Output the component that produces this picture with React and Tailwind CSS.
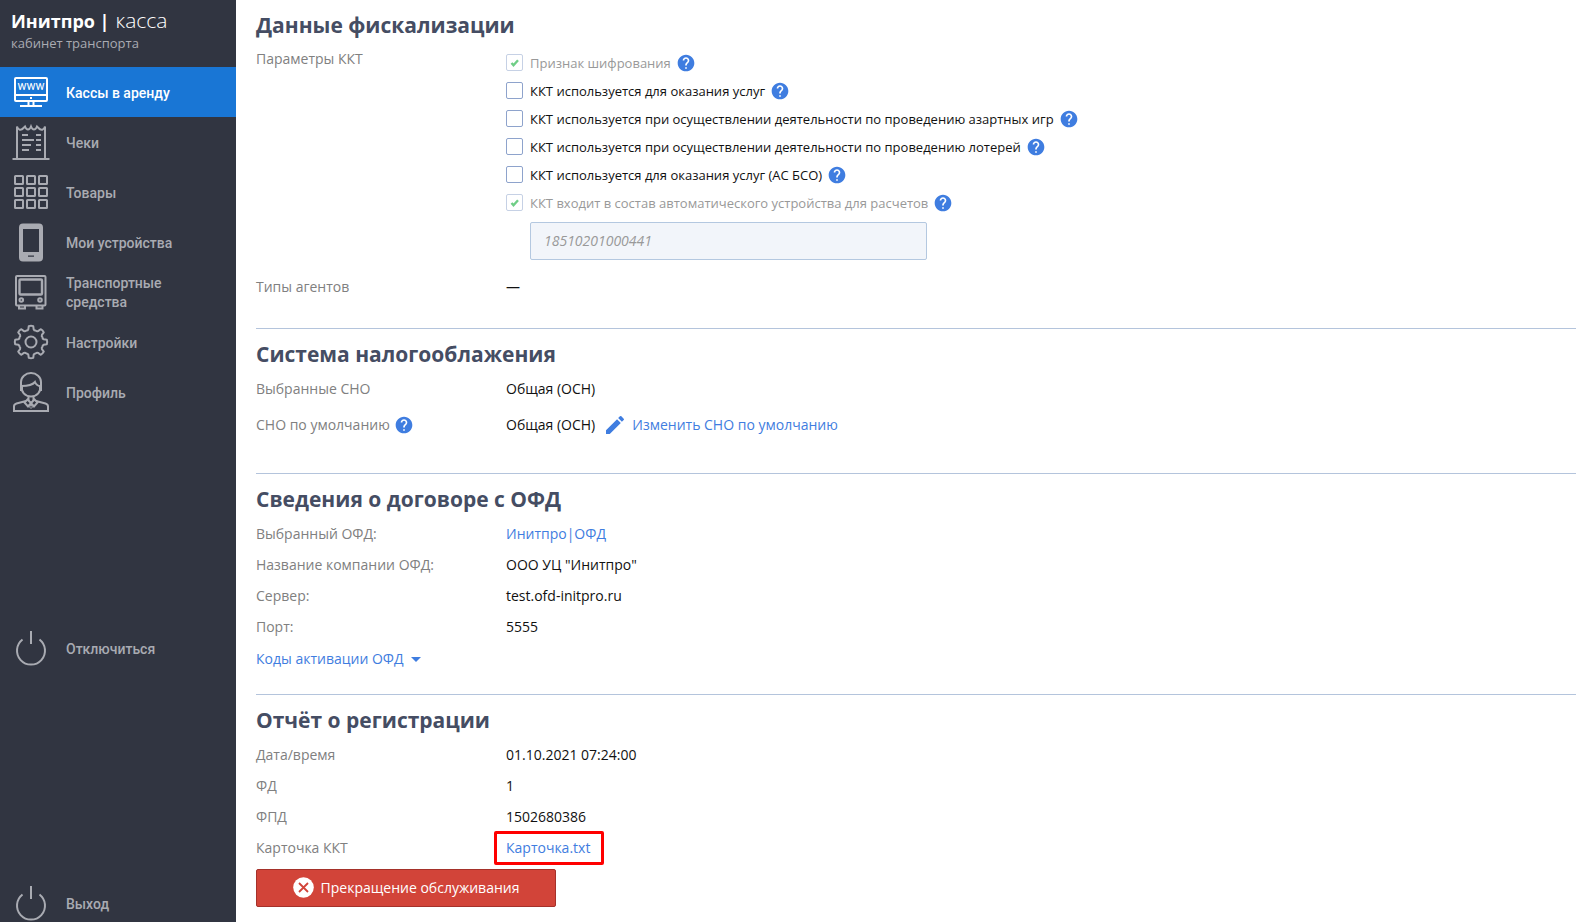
import React, { useState } from 'react';
import { MdHelp, MdEdit, MdArrowDropDown } from 'react-icons/md';

const KKT_PARAMS = [
  { id: 'encryption', label: 'Признак шифрования', checked: true, disabled: true },
  { id: 'services', label: 'ККТ используется для оказания услуг' },
  { id: 'gambling', label: 'ККТ используется при осуществлении деятельности по проведению азартных игр' },
  { id: 'lottery', label: 'ККТ используется при осуществлении деятельности по проведению лотерей' },
  { id: 'bso', label: 'ККТ используется для оказания услуг (АС БСО)' },
  { id: 'automatic', label: 'ККТ входит в состав автоматического устройства для расчетов', checked: true, disabled: true }
];

const MenuSvg = ({ children, strokeWidth = 2 }) => (
  <svg
    width="38"
    height="42"
    viewBox="0 0 38 42"
    fill="none"
    stroke="currentColor"
    strokeWidth={strokeWidth}
    className="shrink-0"
    aria-hidden="true"
  >
    {children}
  </svg>
);

const MonitorIcon = () => (
  <MenuSvg>
    <rect x="3" y="7" width="32" height="23" rx="1" />
    <path d="M3 24h32M16.5 30v5M21.5 30v5M8 35h22" />
    <rect x="18" y="26" width="2" height="2" fill="currentColor" stroke="none" />
    <text
      x="19"
      y="19"
      textAnchor="middle"
      fontSize="12"
      fontWeight="400"
      fontFamily="Roboto, sans-serif"
      fill="currentColor"
      stroke="none"
    >
      www
    </text>
  </MenuSvg>
);

const ReceiptIcon = () => (
  <MenuSvg>
    <path d="M5 38V5.500c1 3.500 4 4.500 6.500 1.500l1.500-1.500c1.500 4 4.500 4 6 0c1.500 4 4.500 4 6 0l1.500 1.500c2.500 3 5.500 2 6.500-1.500V38" />
    <path d="M0.500 38h37" />
    <path d="M10 14h6M10 19h12M10 24h9M10 29h7M24 14h5M24 19h5M24 24h5M24 29h5" />
  </MenuSvg>
);

const GridIcon = () => (
  <MenuSvg>
    {[3, 15, 27].map(y =>
      [3, 15, 27].map(x => <rect key={`${x}-${y}`} x={x} y={y + 2} width="8" height="8" rx="0.5" />)
    )}
  </MenuSvg>
);

const PhoneIcon = () => (
  <MenuSvg>
    <path
      fill="currentColor"
      stroke="none"
      fillRule="evenodd"
      d="M11 2.500h16a4 4 0 0 1 4 4v30a4 4 0 0 1-4 4H11a4 4 0 0 1-4-4v-30a4 4 0 0 1 4-4zM11 8v23h16V8zM16 34.500v1.200h6v-1.200z"
    />
  </MenuSvg>
);

const BusIcon = () => (
  <MenuSvg>
    <rect x="4" y="5" width="29.500" height="29.500" rx="1" />
    <rect x="7.500" y="8.500" width="22.500" height="15" rx="1" strokeWidth="2.400" />
    <path d="M7 35v2.500h6V35M24.500 35v2.500h6V35" />
    <circle cx="9.300" cy="29" r="1.800" />
    <circle cx="28" cy="29" r="1.800" />
  </MenuSvg>
);

const gearPath = () => {
  const point = (deg, r) => {
    const a = ((deg - 90) * Math.PI) / 180;
    return `${(19 + r * Math.cos(a)).toFixed(2)} ${(21 + r * Math.sin(a)).toFixed(2)}`;
  };
  let d = `M${point(-8, 16)}`;
  for (let i = 0; i < 8; i++) {
    const a = i * 45;
    d += `Q${point(a, 16.6)} ${point(a + 8, 16)}`;
    d += `L${point(a + 12, 13)}`;
    d += `Q${point(a + 16, 11.8)} ${point(a + 22.5, 12.4)}`;
    d += `Q${point(a + 29, 11.8)} ${point(a + 33, 13)}`;
    d += `L${point(a + 37, 16)}`;
  }
  return `${d}Z`;
};

const GearIcon = () => (
  <MenuSvg>
    <path d={gearPath()} strokeLinejoin="round" />
    <circle cx="19" cy="21" r="5.500" />
  </MenuSvg>
);

const ProfileIcon = () => (
  <MenuSvg>
    <path d="M9 14V11a10 9 0 0 1 20 0v3c0 7-4 11.500-10 11.500S9 21 9 14z" />
    <path d="M9.500 15c6 0 11-1 13.500-4 1 2.500 3 4 6 4.500" />
    <path d="M9.500 14v6M28.500 14v6" strokeWidth="3" />
    <path d="M16.500 25v5M21.500 25v5M2 41v-5.500c0-1.500 1-2.500 2.500-3L14 30M36 41v-5.500c0-1.500-1-2.500-2.500-3L24 30M1 40h36" />
    <path d="M15.500 28.500l-3 3 3.500 4 3-3.500 3 3.500 3.500-4-3-3L19 32z" />
    <path d="M17.500 36l1.500-2 1.500 2-1.500 1.500z" strokeWidth="1" />
  </MenuSvg>
);

const PowerIcon = () => (
  <MenuSvg>
    <path d="M10.500 12.500a14 14 0 1 0 17 0M19 4v13" />
  </MenuSvg>
);

const MENU = [
  { label: 'Кассы в аренду', icon: MonitorIcon },
  { label: 'Чеки', icon: ReceiptIcon },
  { label: 'Товары', icon: GridIcon },
  { label: 'Мои устройства', icon: PhoneIcon },
  { label: 'Транспортные средства', icon: BusIcon },
  { label: 'Настройки', icon: GearIcon },
  { label: 'Профиль', icon: ProfileIcon }
];

const MenuItem = ({ label, icon: Icon, active }) => (
  <a
    href="#"
    className={`flex h-[50px] shrink-0 items-center gap-4 pl-3 pr-10 font-[Roboto,sans-serif] text-sm leading-[19px] font-medium ${
      active ? 'bg-[#1976d5] text-white' : 'text-[#a9abb2] hover:text-white'
    }`}
  >
    <Icon />
    <span className="pt-0.5">{label}</span>
  </a>
);

const Help = () => (
  <button type="button" aria-label="Справка" className="shrink-0 text-[#3f7de0]">
    <MdHelp size={20} />
  </button>
);

const Section = ({ title, children, className = '' }) => (
  <section className={`pt-2.5 ${className}`}>
    <h2 className="mb-1 text-[21px] leading-[30px] font-bold text-[#454d63]">{title}</h2>
    {children}
  </section>
);

const Row = ({ label, help, tall, children }) => (
  <div className={`flex items-center ${tall ? 'h-[42px]' : 'h-[31px]'}`}>
    <div className="flex w-[250px] shrink-0 items-center gap-1 text-[#808080]">
      {label}
      {help && <Help />}
    </div>
    <div className="flex items-center">{children}</div>
  </div>
);

const ParamCheckbox = ({ param, checked, onChange }) => (
  <div className="flex h-7 items-center gap-[5px]">
    <label className={`flex items-center gap-[7px] text-[13px] ${param.disabled ? 'text-[#999]' : 'text-[#111]'}`}>
      <span className="relative mb-0.5 flex">
        <input
          type="checkbox"
          checked={checked}
          disabled={param.disabled}
          onChange={onChange}
          className="size-[17px] appearance-none rounded-xs border border-[#8ea3cc] bg-white disabled:border-[#c6d1e5]"
        />
        {checked && (
          <svg viewBox="0 0 17 17" fill="none" className="pointer-events-none absolute inset-0 size-[17px]">
            <path d="M5.500 9l2 2.200L12 6.300" stroke="#6fce86" strokeWidth="2.400" />
          </svg>
        )}
      </span>
      {param.label}
    </label>
    <Help />
  </div>
);

const link = 'text-[#3f7de0] hover:underline';

const App = () => {
  const [params, setParams] = useState(() =>
    Object.fromEntries(KKT_PARAMS.map(p => [p.id, Boolean(p.checked)]))
  );

  const toggleParam = (id) => {
    setParams(prev => ({ ...prev, [id]: !prev[id] }));
  };

  return (
    <div className="flex h-screen overflow-hidden bg-white font-['Open_Sans',sans-serif] text-sm text-[#111]">
      <aside className="flex w-[236px] shrink-0 flex-col bg-[#313541]">
        <div className="h-[67px] shrink-0 pt-2 pl-[11px]">
          <div className="flex items-baseline gap-1.5 leading-6 text-white">
            <b className="text-lg leading-6">Инитпро |</b>
            <span className="text-[21px] leading-6 font-light">касса</span>
          </div>
          <div className="text-[13px] leading-5 text-[#a9abb2]">кабинет транспорта</div>
        </div>
        <nav className="flex flex-1 flex-col">
          {MENU.map((item, i) => (
            <MenuItem key={item.label} {...item} active={i === 0} />
          ))}
          <div className="mt-[206px]">
            <MenuItem label="Отключиться" icon={PowerIcon} />
          </div>
          <div className="mt-auto -mb-1.5">
            <MenuItem label="Выход" icon={PowerIcon} />
          </div>
        </nav>
      </aside>

      <main className="min-w-0 flex-1 divide-y divide-[#b4c4dc] overflow-hidden pr-3 pl-5">
        <Section title="Данные фискализации" className="pb-[26px]">
          <div className="flex">
            <div className="w-[250px] shrink-0 pt-[5px] text-[#808080]">Параметры ККТ</div>
            <div className="pt-[5px]">
              {KKT_PARAMS.map(param => (
                <ParamCheckbox
                  key={param.id}
                  param={param}
                  checked={params[param.id]}
                  onChange={() => toggleParam(param.id)}
                />
              ))}
              <input
                type="text"
                aria-label="Номер автоматического устройства"
                defaultValue="18510201000441"
                disabled
                className="mt-[5px] mb-[11px] ml-6 block h-[38px] w-[397px] rounded-xs border border-[#b4c8e0] bg-[#f2f5fa] px-[13px] pb-0.5 text-sm text-[#999] italic"
              />
            </div>
          </div>
          <Row label="Типы агентов">—</Row>
        </Section>

        <Section title="Система налогооблажения" className="pb-[27px]">
          <Row label="Выбранные СНО">Общая (ОСН)</Row>
          <Row label="СНО по умолчанию" help tall>
            Общая (ОСН)
            <a href="#" className={`ml-2 flex items-center gap-[5px] ${link}`}>
              <MdEdit size={24} />
              Изменить СНО по умолчанию
            </a>
          </Row>
        </Section>

        <Section title="Сведения о договоре с ОФД" className="pb-5">
          <Row label="Выбранный ОФД:">
            <a href="#" className={link}>Инитпро|ОФД</a>
          </Row>
          <Row label="Название компании ОФД:">ООО УЦ "Инитпро"</Row>
          <Row label="Сервер:">test.ofd-initpro.ru</Row>
          <Row label="Порт:">5555</Row>
          <button type="button" className={`mt-px flex h-[31px] items-center ${link}`}>
            Коды активации ОФД
            <MdArrowDropDown size={24} />
          </button>
        </Section>

        <Section title="Отчёт о регистрации">
          <Row label="Дата/время">01.10.2021 07:24:00</Row>
          <Row label="ФД">1</Row>
          <Row label="ФПД">1502680386</Row>
          <Row label="Карточка ККТ">
            <a href="#" className={`-ml-3 rounded-xs border-3 border-[#f00] py-1 pr-[11px] pl-[9px] ${link}`}>Карточка.txt</a>
          </Row>
          <button
            type="button"
            className="mt-1.5 flex h-[38px] w-[300px] items-center justify-center gap-[7px] rounded-xs border border-[#a5312a] bg-[#d24439] pb-px text-white"
          >
            <svg width="21" height="21" viewBox="0 0 21 21" aria-hidden="true">
              <circle cx="10.500" cy="10.500" r="10.300" fill="#fff" />
              <path d="M6 6l9 9M15 6l-9 9" stroke="#d24439" strokeWidth="1.800" />
            </svg>
            Прекращение обслуживания
          </button>
        </Section>
      </main>
    </div>
  );
};

export default App;
